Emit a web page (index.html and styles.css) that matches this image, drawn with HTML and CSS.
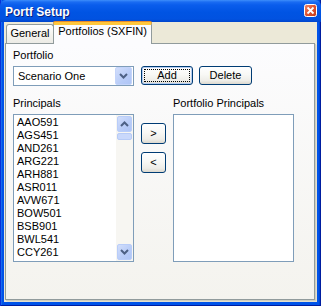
FILE: index.html
```html
<!DOCTYPE html>
<html>
<head>
<meta charset="utf-8">
<title>Portf Setup</title>
<link rel="stylesheet" href="styles.css">
</head>
<body>
<div class="window">
  <div class="titlebar">
    <span class="title">Portf Setup</span>
    <span class="close">
      <svg width="13" height="13" viewBox="0 0 13 13">
        <defs>
          <linearGradient id="cg" x1="0" y1="0" x2="1" y2="1">
            <stop offset="0" stop-color="#F08A6C"/>
            <stop offset="0.5" stop-color="#E0522F"/>
            <stop offset="1" stop-color="#C13A17"/>
          </linearGradient>
        </defs>
        <rect x="0.5" y="0.5" width="12" height="12" rx="2" fill="url(#cg)" stroke="#FFFFFF"/>
        <path d="M3.5 3.5 L9.5 9.5 M9.5 3.5 L3.5 9.5" stroke="#FFFFFF" stroke-width="1.8" fill="none"/>
      </svg>
    </span>
  </div>
  <div class="client">
    <div class="tabs">
      <div class="tab">General</div>
      <div class="tab active">Portfolios (SXFIN)</div>
    </div>
    <div class="panel">
      <div class="label">Portfolio</div>
      <div class="row1">
        <div class="combo">
          <span class="combo-text">Scenario One</span>
          <span class="arrow-btn combo-btn">
            <svg width="9" height="6" viewBox="0 0 9 6"><path d="M1 1 L4.5 4.5 L8 1" stroke="#4D6185" stroke-width="2" fill="none"/></svg>
          </span>
        </div>
        <button class="btn add"><span class="focus">Add</span></button>
        <button class="btn delete">Delete</button>
      </div>
      <div class="row2">
        <div class="col">
          <div class="label">Principals</div>
          <div class="listbox">
            <ul class="items">
              <li>AAO591</li>
              <li>AGS451</li>
              <li>AND261</li>
              <li>ARG221</li>
              <li>ARH881</li>
              <li>ASR011</li>
              <li>AVW671</li>
              <li>BOW501</li>
              <li>BSB901</li>
              <li>BWL541</li>
              <li>CCY261</li>
            </ul>
            <div class="scrollbar">
              <span class="arrow-btn sb-btn">
                <svg width="9" height="6" viewBox="0 0 9 6"><path d="M1 5 L4.5 1.5 L8 5" stroke="#4D6185" stroke-width="2" fill="none"/></svg>
              </span>
              <span class="thumb"></span>
              <span class="track"></span>
              <span class="arrow-btn sb-btn">
                <svg width="9" height="6" viewBox="0 0 9 6"><path d="M1 1 L4.5 4.5 L8 1" stroke="#4D6185" stroke-width="2" fill="none"/></svg>
              </span>
            </div>
          </div>
        </div>
        <div class="col-mid">
          <button class="btn move">&gt;</button>
          <button class="btn move">&lt;</button>
        </div>
        <div class="col">
          <div class="label">Portfolio Principals</div>
          <div class="listbox"></div>
        </div>
      </div>
    </div>
  </div>
</div>
</body>
</html>
```

FILE: styles.css
```css
html, body {
  margin: 0;
  padding: 0;
}
body {
  width: 321px;
  height: 306px;
  overflow: hidden;
  font-family: "Liberation Sans", Arial, sans-serif;
  font-size: 11px;
  color: #000;
}
.window {
  width: 321px;
  height: 306px;
  box-sizing: border-box;
  display: flex;
  flex-direction: column;
  background: #0053E8;
  box-shadow: inset 1px 0 #0831D9, inset -1px 0 #001EA0, inset 0 -1px #001EA0, inset 2px 0 #166AEE, inset -2px 0 #0046D6;
}
.titlebar {
  height: 22px;
  flex: none;
  display: flex;
  align-items: center;
  justify-content: space-between;
  padding: 0 4px 0 5px;
  background: linear-gradient(#3D8EFB 0, #1A6CF2 2px, #0A5DEC 5px, #0054E3 12px, #0152E0 19px, #0045CC 22px);
  border-radius: 6px 6px 0 0;
}
.title {
  color: #FFFFFF;
  font-weight: bold;
  font-size: 12px;
  padding-top: 1px;
  text-shadow: 1px 1px #0A1E7A;
}
.close {
  display: flex;
  width: 13px;
  height: 13px;
  margin-top: -2px;
  margin-right: 0px;
}
.client {
  flex: 1;
  margin: 0 4px 4px 4px;
  padding: 0 2px 2px 1px;
  background: #ECE9D8;
  display: flex;
  flex-direction: column;
}
.tabs {
  display: flex;
  align-items: flex-end;
  height: 21px;
  flex: none;
  padding-left: 1px;
  position: relative;
  z-index: 1;
}
.tab {
  box-sizing: border-box;
  height: 19px;
  width: 48px;
  border: 1px solid #919B9C;
  border-bottom: none;
  border-radius: 3px 3px 0 0;
  background: linear-gradient(#FFFFFF, #F3F2EC 60%, #ECEBE6);
  text-align: center;
  padding-top: 2px;
  line-height: 13px;
}
.tab.active {
  height: 22px;
  width: 99px;
  margin-left: -1px;
  margin-bottom: -1px;
  border-top: 3px solid #FFC73C;
  box-shadow: 0 -1px #E68B2C;
  border-radius: 2px 2px 0 0;
  background: #FCFCFE;
  padding-top: 0;
}
.panel {
  flex: 1;
  border: 1px solid #919B9C;
  background: linear-gradient(#FCFCFE, #F4F3EE);
  box-shadow: 1px 1px #D0CEBF, 2px 2px #E3E0D0;
  padding: 5px 0 0 7px;
}
.label {
  line-height: 13px;
  height: 13px;
  white-space: nowrap;
}
.row1 {
  display: flex;
  margin-top: 4px;
  height: 20px;
}
.combo {
  box-sizing: border-box;
  width: 121px;
  height: 20px;
  border: 1px solid #7F9DB9;
  background: #FFFFFF;
  display: flex;
  align-items: center;
  justify-content: space-between;
  padding: 1px;
}
.combo-text {
  padding-left: 3px;
  line-height: 13px;
}
.arrow-btn {
  box-sizing: border-box;
  display: flex;
  align-items: center;
  justify-content: center;
  border: 1px solid #B9CDF9;
  border-radius: 2px;
  background: linear-gradient(135deg, #D2DEFB, #B8CCF8 60%, #AFC5F6);
}
.combo-btn {
  width: 17px;
  height: 18px;
  border-color: #C4D4FA;
}
.btn {
  box-sizing: border-box;
  border: 1px solid #003C74;
  border-radius: 3px;
  background: linear-gradient(#FFFFFF 0%, #F8F8F5 45%, #EEEDE8 80%, #DCD8CE 100%);
  font-family: "Liberation Sans", Arial, sans-serif;
  font-size: 11px;
  color: #000;
  padding: 0;
  margin: 0;
  line-height: 13px;
  display: flex;
  align-items: center;
  justify-content: center;
}
.add {
  width: 52px;
  height: 19px;
  margin-left: 7px;
  padding: 2px;
  box-shadow: inset 0 0 0 1px #B5CCF2;
}
.focus {
  flex: 1;
  align-self: stretch;
  border: 1px dotted #000;
  display: flex;
  align-items: center;
  justify-content: center;
}
.delete {
  width: 53px;
  height: 19px;
  margin-left: 6px;
}
.row2 {
  display: flex;
  margin-top: 11px;
  gap: 7px;
}
.col {
  width: 121px;
  display: flex;
  flex-direction: column;
}
.listbox {
  box-sizing: border-box;
  margin-top: 4px;
  height: 148px;
  border: 1px solid #7F9DB9;
  background: #FFFFFF;
  display: flex;
}
.items {
  list-style: none;
  margin: 0;
  padding: 1px 0 0 3px;
  flex: 1;
}
.items li {
  line-height: 13px;
  height: 13px;
}
.scrollbar {
  width: 17px;
  display: flex;
  flex-direction: column;
  background: #F7F6F2;
  padding: 1px 1px 1px 1px;
  box-sizing: border-box;
}
.sb-btn {
  width: 15px;
  height: 16px;
  flex: none;
}
.thumb {
  height: 7px;
  margin-top: 1px;
  border: 1px solid #B7CBF6;
  border-radius: 2px;
  background: #C9D8FB;
  box-sizing: border-box;
  flex: none;
}
.track {
  flex: 1;
}
.col-mid {
  width: 25px;
  padding-top: 26px;
  display: flex;
  flex-direction: column;
  gap: 8px;
}
.move {
  width: 25px;
  height: 21px;
}
```
